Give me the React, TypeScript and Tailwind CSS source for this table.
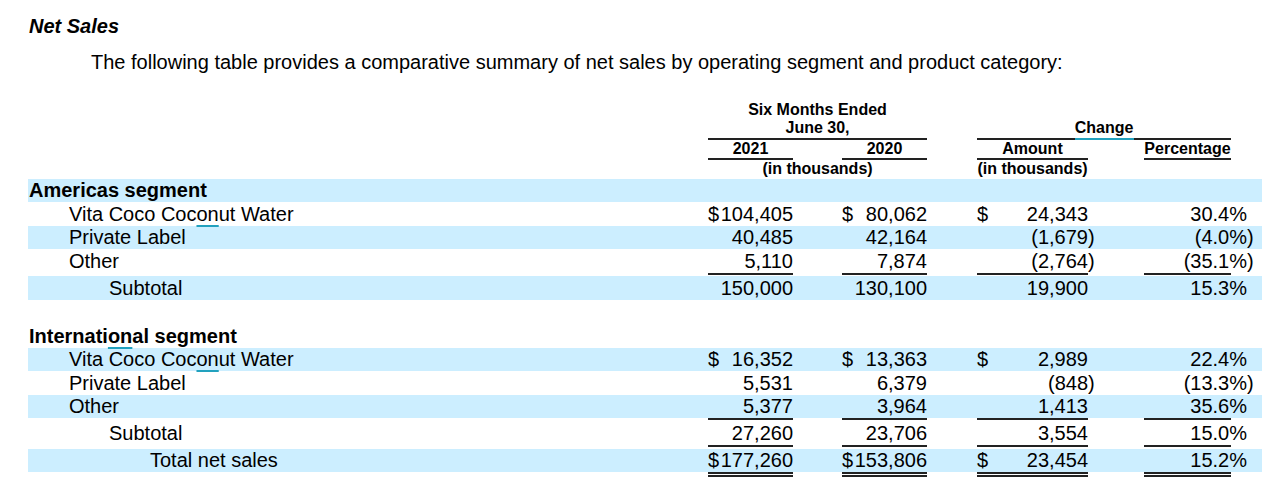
import React from 'react';

// Net sales comparison table (six months ended June 30)

type Row = {
  label: React.ReactNode;
  indent: string;
  cls: string;
  bold?: boolean;
  values?: [string, string, string, string];
  dollars?: boolean;
};

type Rule = { rule: 'single' | 'double'; cls: string };

const Teal = ({ children }: { children: React.ReactNode }) => (
  <span className="underline decoration-[#22a1be] decoration-2 underline-offset-[4px]">{children}</span>
);

const VitaCoco = (
  <>
    Vita Coco Coc<Teal>on</Teal>ut Water
  </>
);

const ROWS: (Row | Rule)[] = [
  { label: 'Americas segment', indent: 'pl-[1px]', cls: 'h-[23px] leading-[23px] bg-[#cceeff]', bold: true },
  { label: VitaCoco, indent: 'pl-[41px]', cls: 'h-[24px] leading-[24px]', values: ['104,405', '80,062', '24,343', '30.4%'], dollars: true },
  { label: 'Private Label', indent: 'pl-[41px]', cls: 'h-[23px] leading-[23px] bg-[#cceeff]', values: ['40,485', '42,164', '(1,679)', '(4.0%)'] },
  { label: 'Other', indent: 'pl-[41px]', cls: 'h-[24px] leading-[24px]', values: ['5,110', '7,874', '(2,764)', '(35.1%)'] },
  { rule: 'single', cls: 'h-[3px]' },
  { label: 'Subtotal', indent: 'pl-[81px]', cls: 'h-[24px] leading-[24px] bg-[#cceeff]', values: ['150,000', '130,100', '19,900', '15.3%'] },
  { label: '', indent: 'pl-[1px]', cls: 'h-[24px] leading-[24px]' },
  {
    label: (
      <>
        Internati<Teal>on</Teal>al segment
      </>
    ),
    indent: 'pl-[1px]',
    cls: 'h-[24px] leading-[24px]',
    bold: true,
  },
  { label: VitaCoco, indent: 'pl-[41px]', cls: 'h-[23px] leading-[23px] bg-[#cceeff]', values: ['16,352', '13,363', '2,989', '22.4%'], dollars: true },
  { label: 'Private Label', indent: 'pl-[41px]', cls: 'h-[24px] leading-[24px]', values: ['5,531', '6,379', '(848)', '(13.3%)'] },
  { label: 'Other', indent: 'pl-[41px]', cls: 'h-[23px] leading-[23px] bg-[#cceeff]', values: ['5,377', '3,964', '1,413', '35.6%'] },
  { rule: 'single', cls: 'h-[3px]' },
  { label: 'Subtotal', indent: 'pl-[81px]', cls: 'h-[24px] leading-[24px]', values: ['27,260', '23,706', '3,554', '15.0%'] },
  { rule: 'single', cls: 'h-[4px]' },
  { label: 'Total net sales', indent: 'pl-[122px]', cls: 'h-[23px] leading-[23px] bg-[#cceeff]', values: ['177,260', '153,806', '23,454', '15.2%'], dollars: true },
  { rule: 'double', cls: 'h-[5px]' },
];

function Num({ text, dollar }: { text: string; dollar?: boolean }) {
  const neg = text.startsWith('(');
  const body = neg ? text.slice(0, -1) : text;
  return (
    <div className="flex justify-between whitespace-nowrap">
      <span>{dollar ? '$' : ''}</span>
      <span>
        {body}
        {neg && <span className="inline-block w-0">)</span>}
      </span>
    </div>
  );
}

function RuleRow({ rule, cls }: Rule) {
  const seg =
    rule === 'double'
      ? 'h-[5px] border-y-2 border-[#222]'
      : 'h-[2px] bg-[#222]';
  return (
    <div className={`flex w-[1234px] ${cls}`}>
      <div className="w-[680px] shrink-0" />
      <div className={`w-[85px] ${seg}`} />
      <div className={`ml-[49px] w-[85px] ${seg}`} />
      <div className={`ml-[50px] w-[111px] ${seg}`} />
      <div className={`ml-[56px] w-[87px] ${seg}`} />
    </div>
  );
}

function DataRow({ row }: { row: Row }) {
  const v = row.values;
  return (
    <div className={`flex w-[1234px] ${row.cls}`}>
      <div className={`w-[680px] shrink-0 whitespace-nowrap ${row.indent} ${row.bold ? 'font-bold' : ''}`}>{row.label}</div>
      {v && (
        <>
          <div className="w-[85px] shrink-0">
            <Num text={v[0]} dollar={row.dollars} />
          </div>
          <div className="ml-[49px] w-[85px] shrink-0">
            <Num text={v[1]} dollar={row.dollars} />
          </div>
          <div className="ml-[50px] w-[111px] shrink-0">
            <Num text={v[2]} dollar={row.dollars} />
          </div>
          <div className="ml-[56px] w-[103px] shrink-0">
            <Num text={v[3]} />
          </div>
        </>
      )}
    </div>
  );
}

function TableHeader() {
  return (
    <div className="flex w-[1234px] text-[16px] font-bold leading-[18px]">
      <div className="w-[680px] shrink-0" />
      <div className="flex w-[219px] shrink-0 flex-col text-center">
        <div className="h-[18px]">Six Months Ended</div>
        <div className="h-[19px]">June 30,</div>
        <div className="h-[2px] bg-[#222]" />
        <div className="flex h-[18px]">
          <div className="w-[85px]">2021</div>
          <div className="ml-[49px] w-[85px]">2020</div>
        </div>
        <div className="flex h-[2px]">
          <div className="w-[85px] bg-[#222]" />
          <div className="ml-[49px] w-[85px] bg-[#222]" />
        </div>
        <div className="h-[19px] whitespace-nowrap">(in thousands)</div>
      </div>
      <div className="ml-[50px] flex w-[254px] shrink-0 flex-col text-center">
        <div className="h-[18px]" />
        <div className="h-[19px]">Change</div>
        <div className="flex h-[2px]">
          <div className="flex-1 bg-[#222]" />
          <div className="w-[59px] bg-[#22a1be]" />
          <div className="flex-1 bg-[#222]" />
        </div>
        <div className="flex h-[18px]">
          <div className="w-[111px]">Amount</div>
          <div className="ml-[56px] w-[87px]">Percentage</div>
        </div>
        <div className="flex h-[2px]">
          <div className="w-[111px] bg-[#222]" />
          <div className="ml-[56px] w-[87px] bg-[#222]" />
        </div>
        <div className="flex h-[19px]">
          <div className="w-[111px] whitespace-nowrap">(in thousands)</div>
        </div>
      </div>
    </div>
  );
}

export default function App() {
  return (
    <div className="h-[490px] w-[1280px] overflow-hidden bg-white pt-[15px] font-['Liberation_Sans',Arial,sans-serif] text-[20px] text-black">
      <h2 className="ml-[29px] text-[20px] font-bold italic leading-[23px]">Net Sales</h2>
      <p className="ml-[91px] mt-[13px] leading-[23px]">
        The following table provides a comparative summary of net sales by operating segment and product category:
      </p>
      <div className="ml-[28px] mt-[27px]">
        <TableHeader />
        {ROWS.map((r, i) =>
          'rule' in r ? <RuleRow key={i} {...r} /> : <DataRow key={i} row={r} />
        )}
      </div>
    </div>
  );
}
